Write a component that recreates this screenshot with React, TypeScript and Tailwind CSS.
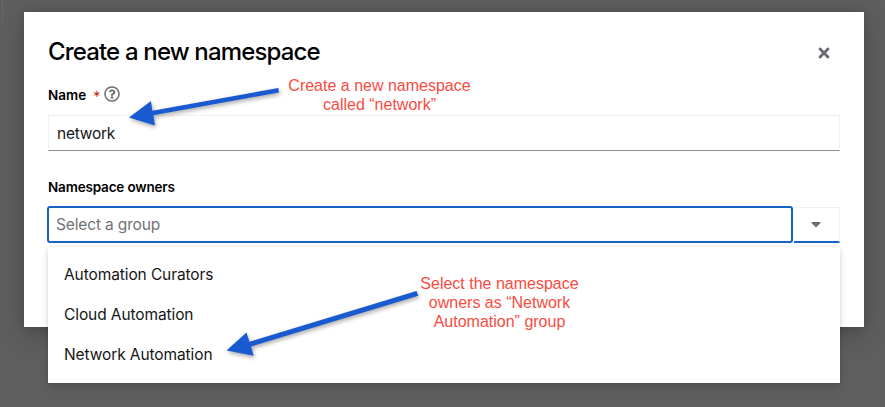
import { FaCaretDown, FaRegQuestionCircle, FaTimes } from "react-icons/fa";

const groups = ["Automation Curators", "Cloud Automation", "Network Automation"];

function Arrow({ points }: { points: string }) {
  return <polygon points={points} fill="#1a5ad0" />;
}

function Annotations() {
  return (
    <>
      <svg
        className="pointer-events-none absolute inset-0 z-20 drop-shadow-[1px_2px_2px_rgba(0,0,0,0.35)]"
        width="885"
        height="407"
        viewBox="0 0 885 407"
      >
        <Arrow points="129,117.5 151,101 152.3,110.8 278.3,88 279,92.5 153.4,115.3 155,125.5" />
        <Arrow points="226.5,350.5 246.5,332.5 249.4,341.8 416.5,291 418.3,295.8 251,346.6 253.7,355.8" />
      </svg>
      <p className="absolute left-[279px] top-[76px] z-20 w-[201px] text-center font-['Liberation_Sans',sans-serif] text-[16px] leading-[19px] text-[#fa4b41]">
        Create a new namespace
        <br />
        called “network”
      </p>
      <p className="absolute left-[409px] top-[274px] z-20 w-[181px] text-center font-['Liberation_Sans',sans-serif] text-[16px] leading-[19px] text-[#fa4b41]">
        Select the namespace
        <br />
        owners as “Network
        <br />
        Automation” group
      </p>
    </>
  );
}

function GroupSelect() {
  return (
    <div className="relative mt-[10px]">
      <div className="-ml-px flex items-end">
        <div className="flex h-[37px] w-[746px] items-center rounded-[3px] border-2 border-[#1763c6] bg-white pl-[7px] pt-px text-[15.5px] tracking-[-0.15px] text-[#6f7276]">
          Select a group
        </div>
        <button
          aria-label="Open group list"
          className="ml-px flex h-9 flex-1 items-center border-b-2 border-r border-t border-[#f0f0f0] border-b-[#1763c6] pb-px pl-[14px]"
        >
          <FaCaretDown className="size-4 text-[#6a6e73]" />
        </button>
      </div>
      <ul className="absolute left-0 right-0 top-[41px] z-10 h-[136px] bg-white py-2 shadow-[0_4px_8px_rgba(3,3,3,0.13),0_0_4px_rgba(3,3,3,0.07)]">
        {groups.map((group) => (
          <li
            key={group}
            className="flex h-10 items-center px-4 text-[15.5px] tracking-[-0.1px] text-[#151515]"
          >
            {group}
          </li>
        ))}
      </ul>
    </div>
  );
}

export default function App() {
  return (
    <main className="relative h-[407px] w-[885px] overflow-hidden bg-[#5e5e5e] pl-6 pr-[21px] pt-3 font-['Inter',sans-serif]">
      <div className="absolute left-0 top-0 h-[22px] w-[3px] border-b border-r border-[#696969]" />
      <section className="h-[315px] w-[840px] bg-white px-6 shadow-[0_8px_24px_rgba(3,3,3,0.2),0_0_8px_rgba(3,3,3,0.14)]">
        <header className="flex h-[74px] items-center justify-between pt-[6px]">
          <h1 className="mb-[2px] text-[24px] font-medium leading-[31px] tracking-[-0.84px] text-black">
            Create a new namespace
          </h1>
          <button aria-label="Close" className="mr-2 mt-[2px]">
            <FaTimes className="size-4 text-[#6a6e73]" />
          </button>
        </header>
        <div className="flex h-[18px] items-center">
          <label className="text-[13.5px] font-semibold leading-[18px] text-black">Name</label>
          <span className="ml-[7px] mt-[3px] text-[14px] leading-[18px] text-[#c9190b]">*</span>
          <FaRegQuestionCircle className="mb-[2px] ml-1 size-4 text-[#6a6e73]" />
        </div>
        <div className="mt-[11px] flex h-9 items-center border border-[#f0f0f0] border-b-[#8a8d90] pl-2 pt-[2px] text-[15.5px] tracking-[-0.25px] text-[#151515]">
          network
        </div>
        <div className="mt-[27px] text-[13.5px] font-semibold leading-[18px] tracking-[-0.17px] text-black">
          Namespace owners
        </div>
        <GroupSelect />
      </section>
      <Annotations />
    </main>
  );
}
